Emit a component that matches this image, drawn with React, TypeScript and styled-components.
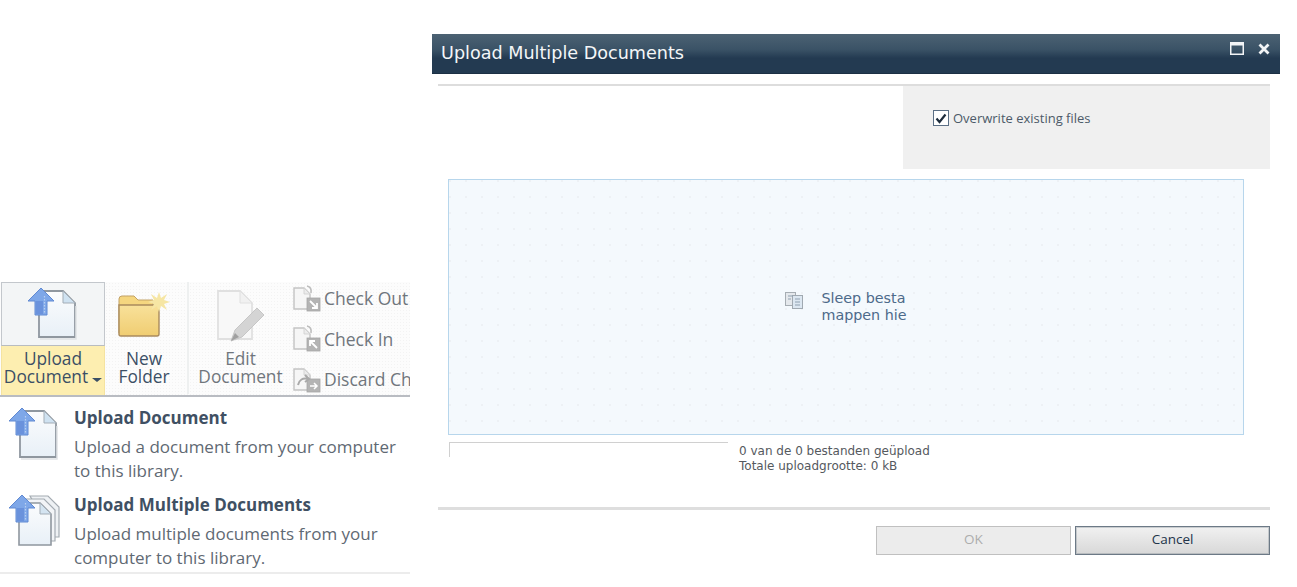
import React from 'react';
import styled, { createGlobalStyle } from 'styled-components';

const GlobalStyle = createGlobalStyle`
  html, body {
    margin: 0;
    padding: 0;
    background: #fff;
  }
`;

const Page = styled.div`
  width: 1297px;
  height: 587px;
  overflow: hidden;
  display: flex;
  align-items: flex-start;
  font-family: 'Open Sans', 'Noto Sans', sans-serif;
`;

const LeftColumn = styled.div`
  width: 410px;
  margin-top: 282px;
  margin-right: 22px;
  flex: none;
`;

const Ribbon = styled.div`
  height: 113px;
  display: flex;
  overflow: hidden;
  border-bottom: 2px solid #b9bcc2;
  background-color: #fcfcfc;
  background-image: radial-gradient(#f3f3f3 0.6px, transparent 0.7px);
  background-size: 3px 3px;
`;

const SplitButton = styled.div`
  width: 104px;
  margin-left: 1px;
  flex: none;
  display: flex;
  flex-direction: column;
`;

const SplitTop = styled.div`
  height: 62px;
  display: flex;
  justify-content: center;
  align-items: center;
  border: 1px solid #c3c7cc;
  border-bottom-color: #b8bcc0;
  background: #f3f5f6;
`;

const SplitBottom = styled.div`
  height: 49px;
  padding-top: 4px;
  box-sizing: border-box;
  background: #fdeeb0;
  border-left: 1px solid #f5e3a0;
  border-right: 1px solid #f5e3a0;
  text-align: center;
`;

const LargeLabel = styled.div<{ $muted?: boolean }>`
  font-size: 17.3px;
  line-height: 18px;
  color: ${(p) => (p.$muted ? '#70767c' : '#3b4f65')};
  white-space: nowrap;
`;

const Caret = styled.span`
  display: inline-block;
  margin-left: 4px;
  vertical-align: 1px;
  border-left: 5px solid transparent;
  border-right: 5px solid transparent;
  border-top: 4px solid #3b4f65;
`;

const LargeButton = styled.div<{ $width: number }>`
  width: ${(p) => p.$width}px;
  flex: none;
  text-align: center;
  display: flex;
  flex-direction: column;
  align-items: center;
`;

const IconSlot = styled.div`
  height: 68px;
  display: flex;
  align-items: center;
  justify-content: center;
`;

const RibbonDivider = styled.div`
  width: 2px;
  height: 112px;
  margin-left: 4px;
  flex: none;
  background: #eef0f0;
`;

const SmallButtons = styled.div`
  display: flex;
  flex-direction: column;
  gap: 14.5px;
  padding: 3px 0 0 1px;
`;

const SmallButton = styled.div`
  height: 26px;
  display: flex;
  align-items: center;
  gap: 3px;
  font-size: 17.5px;
  color: #70767c;
  white-space: nowrap;
`;

const Menu = styled.div`
  height: 177px;
  box-sizing: border-box;
  padding-top: 8px;
  border-bottom: 2px solid #ececec;
`;

const MenuItem = styled.div`
  display: flex;
  height: 87px;
  padding-left: 8px;
`;

const MenuIcon = styled.div`
  width: 66px;
  margin-top: 3px;
  flex: none;
`;

const MenuTitle = styled.div`
  font-size: 17px;
  font-weight: 700;
  line-height: 24px;
  color: #3f5063;
  margin: 1px 0 5px;
  white-space: nowrap;
`;

const MenuText = styled.div`
  font-size: 17px;
  line-height: 24px;
  color: #5f6973;
  white-space: nowrap;
`;

const Dialog = styled.div`
  width: 848px;
  margin-top: 34px;
  flex: none;
`;

const TitleBar = styled.div`
  height: 40px;
  box-sizing: border-box;
  display: flex;
  align-items: center;
  justify-content: space-between;
  padding: 0 10px 2px 9px;
  background: linear-gradient(#4c6273 0%, #3a5266 40%, #233a51 62%, #233a51 100%);
  border-bottom: 1px solid #1c3044;
`;

const Title = styled.div`
  font-family: 'DejaVu Sans', Verdana, sans-serif;
  font-size: 17.6px;
  color: #f4f6f8;
  white-space: nowrap;
`;

const WindowControls = styled.div`
  display: flex;
  gap: 14px;
  align-items: center;
  margin-top: -8px;
`;

const DialogBody = styled.div`
  margin: 0 10px 0 6px;
`;

const TopRule = styled.div`
  height: 2px;
  margin-top: 10px;
  background: #dddddd;
`;

const OptionsRow = styled.div`
  display: flex;
  justify-content: flex-end;
`;

const OptionsPanel = styled.div`
  width: 367px;
  height: 83px;
  box-sizing: border-box;
  padding: 24px 0 0 30px;
  background: #f0f0f0;
  display: flex;
  align-items: flex-start;
  gap: 4px;
`;

const CheckBox = styled.div`
  width: 16px;
  height: 16px;
  box-sizing: border-box;
  border: 1px solid #5b6f85;
  background: #fff;
  display: flex;
  align-items: center;
  justify-content: center;
  flex: none;
`;

const OptionLabel = styled.div`
  font-size: 13px;
  line-height: 18px;
  margin-top: -1px;
  color: #4c5a68;
  white-space: nowrap;
`;

const DropZone = styled.div`
  margin: 10px 26px 0 10px;
  height: 256px;
  box-sizing: border-box;
  border: 1px solid #b7d6ec;
  background-color: #f4f9fd;
  background-image: radial-gradient(circle at 1px 1px, #edf1f5 1px, transparent 1px);
  background-size: 16px 16px;
  display: flex;
  align-items: center;
  justify-content: center;
`;

const DropPrompt = styled.div`
  display: flex;
  align-items: flex-start;
  gap: 18px;
`;

const DropIconSlot = styled.div`
  margin-top: 1px;
  line-height: 0;
`;

const DropText = styled.div`
  font-family: 'DejaVu Sans', Verdana, sans-serif;
  font-size: 14.3px;
  line-height: 17px;
  margin-top: -1px;
  color: #4d6a8a;
  white-space: nowrap;
`;

const ProgressRow = styled.div`
  display: flex;
  margin: 7px 0 0 11px;
  height: 51px;
`;

const ProgressTrack = styled.div`
  width: 279px;
  height: 15px;
  box-sizing: border-box;
  border-top: 1px solid #d0d0d0;
  border-left: 1px solid #d0d0d0;
  flex: none;
`;

const ProgressText = styled.div`
  margin-left: 11px;
  font-family: 'DejaVu Sans', Verdana, sans-serif;
  font-size: 12px;
  line-height: 15px;
  padding-top: 2px;
  color: #55595e;
  white-space: nowrap;
`;

const BottomRule = styled.div`
  height: 3px;
  margin-top: 14px;
  background: #dedede;
`;

const Buttons = styled.div`
  display: flex;
  justify-content: flex-end;
  gap: 4px;
  margin-top: 16px;
`;

const DialogButton = styled.div<{ $disabled?: boolean }>`
  width: 195px;
  height: 29px;
  box-sizing: border-box;
  padding-bottom: 3px;
  display: flex;
  align-items: center;
  justify-content: center;
  font-size: 13.5px;
  border: 1px solid ${(p) => (p.$disabled ? '#c0c0c0' : '#6c7986')};
  box-shadow: inset 0 0 0 1px ${(p) => (p.$disabled ? 'transparent' : 'rgba(108, 121, 134, 0.3)')};
  color: ${(p) => (p.$disabled ? '#adadad' : '#22344a')};
  background: ${(p) =>
    p.$disabled ? '#ececec' : 'linear-gradient(#f1f1f1, #e3e3e3 55%, #d8d8d8)'};
`;

function UploadArrow({ x = 0, y = 0 }: { x?: number; y?: number }) {
  return (
    <g transform={`translate(${x} ${y})`}>
      <path
        d="M13 0 L26 13 L19 13 L19 27 L7 27 L7 13 L0 13 Z"
        fill="#7ea7e8"
        stroke="#6089d2"
        strokeWidth="1"
      />
      <rect x="8" y="13" width="7" height="13" fill="#6a92dc" />
      <path d="M16.5 8 V26" stroke="#b9cff0" strokeWidth="1.2" strokeDasharray="1.5 1.5" />
    </g>
  );
}

function PageSheet({ id }: { id: string }) {
  return (
    <>
      <defs>
        <linearGradient id={id} x1="0" y1="0" x2="0" y2="1">
          <stop offset="0" stopColor="#fbfcfd" />
          <stop offset="1" stopColor="#e8f0f7" />
        </linearGradient>
      </defs>
      <path
        d="M12 3 H36 L48 15 V49 H12 Z"
        fill={`url(#${id})`}
        stroke="#8f979f"
        strokeWidth="1.8"
      />
      <path d="M36 3 V15 H48 Z" fill="#cfe2f1" stroke="#a3adb6" strokeWidth="1" />
      <path d="M13 51 H49 V18" fill="none" stroke="#dfe2e5" strokeWidth="1.5" />
    </>
  );
}

function UploadDocIcon({ id }: { id: string }) {
  return (
    <svg width="52" height="52" viewBox="0 0 52 52">
      <PageSheet id={id} />
      <UploadArrow x={1} y={0} />
    </svg>
  );
}

function UploadManyIcon() {
  return (
    <svg width="52" height="52" viewBox="0 0 52 52">
      <path d="M22 1 H40 L51 12 V42 H46 Z" fill="#eef1f4" stroke="#a4abb2" strokeWidth="1.2" />
      <path d="M17 4 H36 L47 15 V46 H42 Z" fill="#f2f4f7" stroke="#a4abb2" strokeWidth="1.2" />
      <defs>
        <linearGradient id="stackFill" x1="0" y1="0" x2="0" y2="1">
          <stop offset="0" stopColor="#fbfcfd" />
          <stop offset="1" stopColor="#e8f0f7" />
        </linearGradient>
      </defs>
      <path
        d="M11 8 H32 L43 19 V50 H11 Z"
        fill="url(#stackFill)"
        stroke="#8f979f"
        strokeWidth="1.6"
      />
      <path d="M32 8 V19 H43 Z" fill="#d4e4f1" stroke="#a3adb6" strokeWidth="1" />
      <UploadArrow x={1} y={0} />
    </svg>
  );
}

function FolderIcon() {
  return (
    <svg width="54" height="50" viewBox="0 0 54 50">
      <defs>
        <linearGradient id="folderFill" x1="0" y1="0" x2="0" y2="1">
          <stop offset="0" stopColor="#f8e19a" />
          <stop offset="1" stopColor="#f0cd72" />
        </linearGradient>
      </defs>
      <path
        d="M2 8 Q2 5 5 5 H17 L21 9 H36 V42 H2 Z"
        fill="#f5d67f"
        stroke="#c3a266"
        strokeWidth="1"
      />
      <path
        d="M2 14 H42 V43 Q42 45 40 45 H4 Q2 45 2 43 Z"
        fill="url(#folderFill)"
        stroke="#a98a5d"
        strokeWidth="1.4"
      />
      <path
        d="M42 1 L44 7 L50 3 L47 9 L53 11 L47 13 L50 19 L44 15 L42 21 L40 15 L34 19 L37 13 L31 11 L37 9 L34 3 L40 7 Z"
        fill="#f6e6a4"
      />
    </svg>
  );
}

function EditDocIcon() {
  return (
    <svg width="52" height="56" viewBox="0 0 52 56">
      <path d="M3 3 H25 L37 15 V51 H3 Z" fill="#f8f8f8" stroke="#e0e0e0" strokeWidth="1.8" />
      <path d="M25 3 V15 H37 Z" fill="#f1f1f1" stroke="#e0e0e0" strokeWidth="1" />
      <path d="M16 53 L20 42 L42 20 L49 27 L27 49 Z" fill="#d4d4d4" stroke="#c6c6c6" strokeWidth="1" />
      <path d="M16 53 L20 45 L24 49 Z" fill="#a0a0a0" />
    </svg>
  );
}

function SmallDocIcon({ kind }: { kind: 'out' | 'in' | 'discard' }) {
  return (
    <svg width="28" height="27" viewBox="0 0 28 27">
      <path d="M1 3 H11 L17 9 V24 H1 Z" fill="#f6f6f6" stroke="#c4c4c4" strokeWidth="1.4" />
      <path d="M11 3 V9 H17 Z" fill="#ececec" stroke="#cfcfcf" strokeWidth="0.8" />
      <rect x="14" y="13" width="13" height="13" fill="#b4b4b4" stroke="#a6a6a6" strokeWidth="0.8" />
      {kind === 'out' && (
        <>
          <path d="M14 1 Q19 2 18 8" fill="none" stroke="#bdbdbd" strokeWidth="1.6" />
          <path d="M17 16 L24 23 M24 18 V23 H19" stroke="#fff" strokeWidth="1.8" fill="none" />
        </>
      )}
      {kind === 'in' && (
        <>
          <path d="M14 1 Q19 2 18 8" fill="none" stroke="#bdbdbd" strokeWidth="1.6" />
          <path d="M24 23 L17 16 M17 21 V16 H22" stroke="#fff" strokeWidth="1.8" fill="none" />
        </>
      )}
      {kind === 'discard' && (
        <>
          <path d="M5 19 Q7 11 15 13 M12 9 L16 13 L12 16" stroke="#a9a9a9" strokeWidth="2" fill="none" />
          <path d="M17 20 H24 M21 17 L24 20 L21 23" stroke="#fff" strokeWidth="1.5" fill="none" />
        </>
      )}
    </svg>
  );
}

function DropFilesIcon() {
  return (
    <svg width="18" height="17" viewBox="0 0 18 17">
      <rect x="0.5" y="0.5" width="10" height="13" fill="#e4e8ec" stroke="#a6adb3" />
      <rect x="7.5" y="3.5" width="10" height="13" fill="#dce7f1" stroke="#a0a9b1" />
      <path d="M3 4 H8 M3 7 H6 M10 7 H15 M10 10 H15 M10 13 H15" stroke="#8fa0b0" />
    </svg>
  );
}

export default function App() {
  return (
    <Page>
      <GlobalStyle />
      <LeftColumn>
        <Ribbon>
          <SplitButton>
            <SplitTop>
              <UploadDocIcon id="ribbonSheet" />
            </SplitTop>
            <SplitBottom>
              <LargeLabel>
                Upload
                <br />
                Document
                <Caret />
              </LargeLabel>
            </SplitBottom>
          </SplitButton>
          <LargeButton $width={78}>
            <IconSlot>
              <FolderIcon />
            </IconSlot>
            <LargeLabel>
              New
              <br />
              Folder
            </LargeLabel>
          </LargeButton>
          <RibbonDivider />
          <LargeButton $width={103}>
            <IconSlot>
              <EditDocIcon />
            </IconSlot>
            <LargeLabel $muted>
              Edit
              <br />
              Document
            </LargeLabel>
          </LargeButton>
          <SmallButtons>
            <SmallButton>
              <SmallDocIcon kind="out" />
              Check Out
            </SmallButton>
            <SmallButton>
              <SmallDocIcon kind="in" />
              Check In
            </SmallButton>
            <SmallButton>
              <SmallDocIcon kind="discard" />
              Discard Ch
            </SmallButton>
          </SmallButtons>
        </Ribbon>
        <Menu>
          <MenuItem>
            <MenuIcon>
              <UploadDocIcon id="menuSheet" />
            </MenuIcon>
            <div>
              <MenuTitle>Upload Document</MenuTitle>
              <MenuText>
                Upload a document from your computer
                <br />
                to this library.
              </MenuText>
            </div>
          </MenuItem>
          <MenuItem>
            <MenuIcon>
              <UploadManyIcon />
            </MenuIcon>
            <div>
              <MenuTitle>Upload Multiple Documents</MenuTitle>
              <MenuText>
                Upload multiple documents from your
                <br />
                computer to this library.
              </MenuText>
            </div>
          </MenuItem>
        </Menu>
      </LeftColumn>
      <Dialog>
        <TitleBar>
          <Title>Upload Multiple Documents</Title>
          <WindowControls>
            <svg width="14" height="13" viewBox="0 0 14 13">
              <rect x="0.75" y="0.75" width="12.5" height="11.5" fill="none" stroke="#f2f4f6" strokeWidth="1.5" />
              <rect x="0" y="0" width="14" height="3.5" fill="#f2f4f6" />
            </svg>
            <svg width="12" height="12" viewBox="0 0 12 12">
              <path d="M1.5 1.5 L10.5 10.5 M10.5 1.5 L1.5 10.5" stroke="#f2f4f6" strokeWidth="2.8" />
            </svg>
          </WindowControls>
        </TitleBar>
        <DialogBody>
          <TopRule />
          <OptionsRow>
            <OptionsPanel>
              <CheckBox>
                <svg width="12" height="11" viewBox="0 0 12 11">
                  <path d="M1.5 5.5 L4.5 9 L10.5 1.5" fill="none" stroke="#1d2c3c" strokeWidth="2.2" />
                </svg>
              </CheckBox>
              <OptionLabel>Overwrite existing files</OptionLabel>
            </OptionsPanel>
          </OptionsRow>
          <DropZone>
            <DropPrompt>
              <DropIconSlot>
                <DropFilesIcon />
              </DropIconSlot>
              <DropText>
                Sleep besta
                <br />
                mappen hie
              </DropText>
            </DropPrompt>
          </DropZone>
          <ProgressRow>
            <ProgressTrack />
            <ProgressText>
              0 van de 0 bestanden geüpload
              <br />
              Totale uploadgrootte: 0 kB
            </ProgressText>
          </ProgressRow>
          <BottomRule />
          <Buttons>
            <DialogButton $disabled>OK</DialogButton>
            <DialogButton>Cancel</DialogButton>
          </Buttons>
        </DialogBody>
      </Dialog>
    </Page>
  );
}
